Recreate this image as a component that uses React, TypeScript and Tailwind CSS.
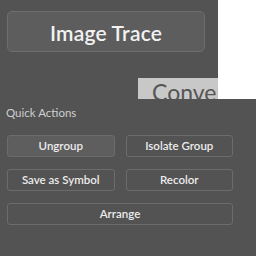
import React from "react";

const font = { fontFamily: '"Lato", "Open Sans", "Liberation Sans", sans-serif' };

function Btn({ label, active, className = "" }: { label: string; active?: boolean; className?: string }) {
  return (
    <div
      className={`h-[22px] flex items-center justify-center rounded-[3px] border border-[#6c6c6c] text-[11.5px] font-semibold text-[#ececec] ${
        active ? "bg-[#5e5e5e]" : "bg-[#535353]"
      } ${className}`}
    >
      {label}
    </div>
  );
}

export default function App() {
  return (
    <div className="w-[256px] h-[256px] bg-white flex flex-col overflow-hidden" style={font}>
      <div className="flex h-[99px]">
        <div className="w-[218px] h-full bg-[#535353] flex flex-col">
          <div className="mt-[11px] ml-[7px] w-[198px] h-[41px] rounded-[5px] border border-[#6e6e6e] bg-[#5d5d5d] flex items-center justify-center pt-[2px] text-[21px] tracking-[0.2px] font-semibold text-[#f2f2f2]">
            Image Trace
          </div>
          <div className="mt-auto self-end w-[80px] h-[21px] bg-[#c8c8c8] overflow-hidden pl-[14px]">
            <span className="block text-[23px] leading-[28px] text-[#555555] whitespace-nowrap">Convert</span>
          </div>
        </div>
        <div className="flex-1 bg-white" />
      </div>
      <div className="flex-1 bg-[#535353] pl-[7px] pt-[7px]">
        <div className="text-[11.5px] text-[#cfcfcf] leading-[14px] -ml-[1px]">Quick Actions</div>
        <div className="mt-[15px] w-[226px] grid grid-cols-2 gap-x-[11px] gap-y-[12px]">
          <Btn label="Ungroup" active />
          <Btn label="Isolate Group" />
          <Btn label="Save as Symbol" />
          <Btn label="Recolor" />
          <Btn label="Arrange" className="col-span-2" />
        </div>
      </div>
    </div>
  );
}
